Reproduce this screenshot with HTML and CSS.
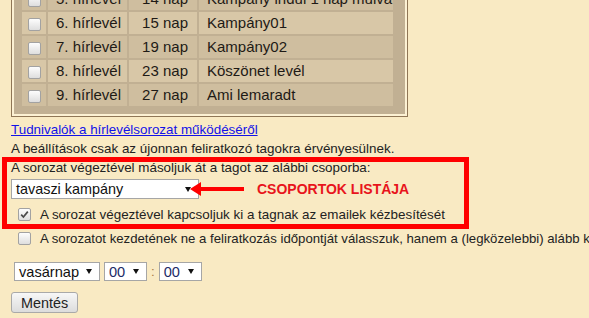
FILE: index.html
```html
<!DOCTYPE html>
<html lang="hu">
<head>
    <meta charset="UTF-8">
    <meta name="viewport" content="width=device-width, initial-scale=1.0">
    <title>Hírlevélsorozat beállításai</title>
    <link rel="stylesheet" href="styles.css">
</head>
<body>

<!-- Letters of the series -->
<div class="series-box">
    <div class="series-inner">
        <table class="series">
            <colgroup>
                <col class="w-check">
                <col class="w-name">
                <col class="w-days">
                <col class="w-subject">
            </colgroup>
            <tr class="row-dark">
                <td class="col-check"><span class="cb"></span></td>
                <td class="col-name">5. hírlevél</td>
                <td class="col-days">14 nap</td>
                <td class="col-subject">Kampány indul 1 nap múlva</td>
            </tr>
            <tr class="row-light">
                <td class="col-check"><span class="cb"></span></td>
                <td class="col-name">6. hírlevél</td>
                <td class="col-days">15 nap</td>
                <td class="col-subject">Kampány01</td>
            </tr>
            <tr class="row-dark">
                <td class="col-check"><span class="cb"></span></td>
                <td class="col-name">7. hírlevél</td>
                <td class="col-days">19 nap</td>
                <td class="col-subject">Kampány02</td>
            </tr>
            <tr class="row-light">
                <td class="col-check"><span class="cb"></span></td>
                <td class="col-name">8. hírlevél</td>
                <td class="col-days">23 nap</td>
                <td class="col-subject">Köszönet levél</td>
            </tr>
            <tr class="row-dark">
                <td class="col-check"><span class="cb"></span></td>
                <td class="col-name">9. hírlevél</td>
                <td class="col-days">27 nap</td>
                <td class="col-subject">Ami lemaradt</td>
            </tr>
        </table>
    </div>
</div>

<p class="line"><a href="#" class="help-link">Tudnivalók a hírlevélsorozat működéséről</a></p>
<p class="line">A beállítások csak az újonnan feliratkozó tagokra érvényesülnek.</p>

<!-- Settings marked with the red callout -->
<div class="callout">
    <p class="line">A sorozat végeztével másoljuk át a tagot az alábbi csoporba:</p>
    <div class="group-row">
        <div class="select select-wide">
            <span>tavaszi kampány</span>
            <span class="caret"></span>
        </div>
        <svg class="callout-arrow" width="56" height="14" viewBox="0 0 56 14">
            <polygon points="0,7 11,0 11,14" fill="#f00"/>
            <rect x="10" y="5" width="44" height="4" fill="#f00"/>
        </svg>
        <span class="callout-label">CSOPORTOK LISTÁJA</span>
    </div>
    <div class="check-line">
        <span class="cb cb-checked">
            <svg width="11" height="11" viewBox="0 0 11 11">
                <path d="M2.2 5.6 L4.4 8 L8.8 2.6" fill="none" stroke="#4a4a4a" stroke-width="1.7"/>
            </svg>
        </span>
        A sorozat végeztével kapcsoljuk ki a tagnak az emailek kézbesítését
    </div>
    <div class="callout-frame"></div>
</div>

<div class="check-line nowrap">
    <span class="cb"></span>
    A sorozatot kezdetének ne a feliratkozás időpontját válasszuk, hanem a (legközelebbi) alább kiválasztott időpontot
</div>

<div class="time-row">
    <div class="select select-day">
        <span>vasárnap</span>
        <span class="caret"></span>
    </div>
    <div class="select select-num">
        <span>00</span>
        <span class="caret"></span>
    </div>
    <span class="colon">:</span>
    <div class="select select-num">
        <span>00</span>
        <span class="caret"></span>
    </div>
</div>

<button type="button" class="save-btn">Mentés</button>

</body>
</html>
```

FILE: styles.css
```css
html, body {
    overflow: hidden;
}

body {
    font-family: "Liberation Sans", Arial, sans-serif;
    font-size: 13.4px;
    color: #222;
    background-color: #f9eac3;
    margin: 0;
    padding: 0 0 0 11px;
}

/* letters table */
.series-box {
    width: 391px;
    margin-top: -23px;
    border: 1px solid #8f7656;
    padding: 2px;
    background-color: #fcf1d3;
}

.series-inner {
    background-color: #c1b093;
    padding: 6px;
}

.series {
    width: 375px;
    table-layout: fixed;
    border-collapse: separate;
    border-spacing: 2px;
    font-size: 15px;
    color: #1e1a16;
}

.w-check { width: 24px; }
.w-name { width: 79px; }
.w-days { width: 68px; }
.w-subject { width: 194px; }

.series td {
    height: 22px;
    padding: 0 0 0 8px;
    line-height: 22px;
    white-space: nowrap;
    overflow: hidden;
}

.row-light td {
    background-color: #d8c7a7;
}

.row-dark td {
    background-color: #cfbe9f;
}

.series .col-check {
    padding: 0;
    text-align: center;
}

.col-check .cb {
    vertical-align: middle;
}

.series .col-days {
    text-align: right;
    padding: 0 9px 0 0;
}

/* checkbox look */
.cb {
    display: inline-block;
    box-sizing: border-box;
    width: 13px;
    height: 13px;
    border: 1px solid #a2a2a2;
    border-radius: 2px;
    background: linear-gradient(#fdfdfd, #dedede);
    flex-shrink: 0;
}

.cb svg {
    display: block;
}

/* text lines */
.line {
    margin: 0;
    height: 19px;
    line-height: 19px;
    white-space: nowrap;
}

.series-box + .line {
    margin-top: 3px;
}

.help-link {
    color: #1212e8;
}

/* callout */
.callout {
    position: relative;
}

.group-row {
    display: flex;
    align-items: center;
    margin-top: 2px;
    height: 20px;
}

.select {
    display: flex;
    align-items: center;
    justify-content: space-between;
    box-sizing: border-box;
    background-color: #fff;
    border: 1px solid #a6a6a6;
    padding: 0 7px 0 4px;
    color: #111;
}

.caret {
    width: 0;
    height: 0;
    border-left: 3px solid transparent;
    border-right: 3px solid transparent;
    border-top: 5px solid #111;
}

.select-wide {
    width: 188px;
    height: 20px;
    font-size: 14.4px;
}

.callout-arrow {
    margin-left: -9px;
    flex-shrink: 0;
}

.callout-label {
    margin-left: 11px;
    font-size: 14px;
    font-weight: bold;
    color: #e8141c;
}

.check-line {
    display: flex;
    align-items: center;
    height: 19px;
    padding-left: 7px;
    gap: 9px;
    white-space: nowrap;
}

.callout .check-line {
    margin-top: 6px;
}

.callout-frame {
    position: absolute;
    left: -9px;
    top: -1px;
    bottom: -5px;
    width: 467px;
    box-sizing: border-box;
    border: 5px solid #f00;
    pointer-events: none;
}

.nowrap {
    margin-top: 5px;
    font-size: 13.2px;
}

/* time selectors */
.time-row {
    display: flex;
    align-items: center;
    gap: 4px;
    margin-top: 14px;
    padding-left: 3px;
}

.time-row .select {
    height: 19px;
    font-size: 14.6px;
}

.select-day {
    width: 86px;
}

.select-num {
    width: 43px;
}

.select-num span:first-child {
    color: #1c2b66;
}

.colon {
    color: #a97d45;
}

.save-btn {
    display: block;
    margin-top: 11px;
    height: 21px;
    padding: 0 9px;
    font-family: "Liberation Sans", Arial, sans-serif;
    font-size: 14.4px;
    color: #222;
    background: linear-gradient(#f7f7f7, #dcdcdc);
    border: 1px solid #a9a9a9;
    border-radius: 3px;
}
```
